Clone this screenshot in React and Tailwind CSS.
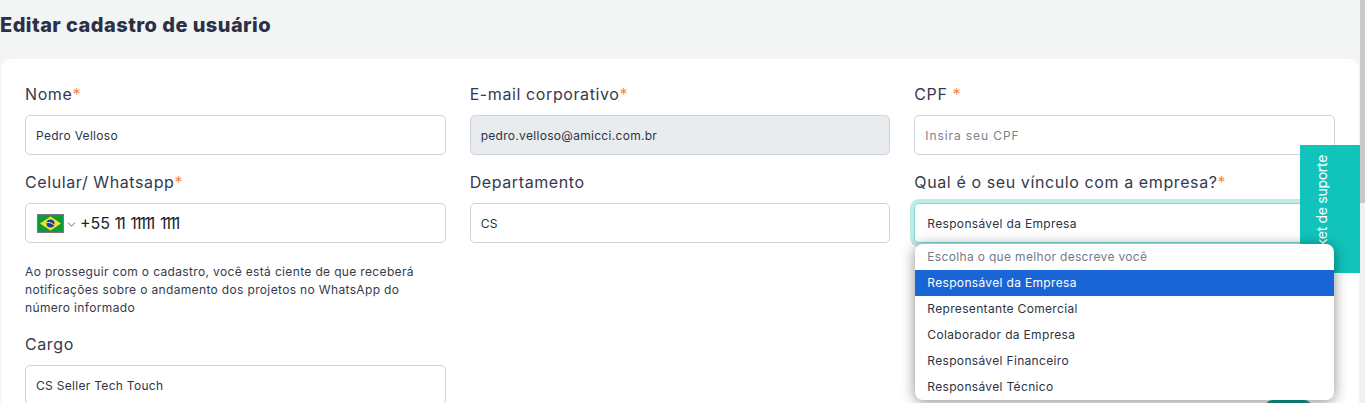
import { ChevronDown } from "lucide-react";

const font = "font-['Inter','Noto_Sans',sans-serif]";
const inputClass =
  "h-10 w-full rounded-[5px] border border-[#ced4da] px-[10px] text-[12px] tracking-[0.3px] text-[#2e3344] outline-none placeholder:tracking-[0.9px] placeholder:text-[#7d818d]";

const options = [
  "Responsável da Empresa",
  "Representante Comercial",
  "Colaborador da Empresa",
  "Responsável Financeiro",
  "Responsável Técnico",
];

const Label = ({ text, star }) => (
  <label className="mb-2 block h-6 text-[16px] leading-[22px] tracking-[0.6px] text-[#343a4e]">
    {text}
    {star && <span className="text-[#f58a42]">{star}</span>}
  </label>
);

const Field = ({ label, star, className = "bg-white", ...props }) => (
  <div>
    <Label text={label} star={star} />
    <input readOnly className={`${inputClass} ${className}`} {...props} />
  </div>
);

const BrazilFlag = () => (
  <svg width="27" height="19" viewBox="0 0 27 19" className="shrink-0">
    <rect width="27" height="19" fill="#7c7c7c" />
    <rect x="1" y="1" width="25" height="17" fill="#0c9b3a" />
    <polygon points="13.5,2.5 24,9.5 13.5,16.5 3,9.5" fill="#fde021" />
    <circle cx="13.5" cy="9.5" r="4" fill="#1c3f94" />
    <path d="M9.8 8.6 C12 8.2 15 9 17.1 10.9" stroke="#fff" strokeWidth="0.9" fill="none" />
  </svg>
);

const App = () => {
  return (
    <div className={`${font} relative flex h-[403px] w-[1365px] overflow-hidden bg-[#f3f5f5]`}>
      <div className="flex-1">
        <h1 className="h-[59px] pt-[11px] text-[20px] leading-[28px] font-extrabold tracking-[0.45px] text-[#2b3044]">
          Editar cadastro de usuário
        </h1>
        <div className="mx-px h-[400px] rounded-[10px] bg-white p-6">
          <div className="grid grid-cols-3 gap-x-6">
            <div className="flex flex-col gap-4">
              <Field label="Nome" star="*" defaultValue="Pedro Velloso" />
              <div>
                <Label text="Celular/ Whatsapp" star="*" />
                <div className="flex h-10 items-center rounded-[5px] border border-[#ced4da] bg-white pl-[11px]">
                  <BrazilFlag />
                  <ChevronDown size={13} strokeWidth={2} className="mt-[3px] ml-px text-[#9a9ea8]" />
                  <span className="ml-[2px] text-[16px] text-[#20232e]">
                    +55 <span className="tracking-[-1.9px] [word-spacing:4px]">11 11111 1111</span>
                  </span>
                </div>
              </div>
              <p className="mt-1 pr-2 text-[12px] leading-[18px] tracking-[0.35px] text-[#343a4e]">
                Ao prosseguir com o cadastro, você está ciente de que receberá notificações sobre o andamento dos projetos no WhatsApp do número informado
              </p>
              <Field label="Cargo" defaultValue="CS Seller Tech Touch" />
            </div>
            <div className="flex flex-col gap-4">
              <Field
                label="E-mail corporativo"
                star="*"
                defaultValue="pedro.velloso@amicci.com.br"
                className="bg-[#e9ecef]"
              />
              <Field label="Departamento" defaultValue="CS" />
            </div>
            <div className="flex flex-col gap-4">
              <Field label="CPF" star=" *" placeholder="Insira seu CPF" />
              <div className="relative">
                <Label text="Qual é o seu vínculo com a empresa?" star="*" />
                <div className="flex h-10 items-center rounded-[5px] border border-[#7fdbd3] bg-white px-3 pt-px text-[12px] tracking-[0.33px] text-[#2e3344] shadow-[0_0_0_4px_#bcece8]">
                  Responsável da Empresa
                </div>
                {/* open dropdown sits over the ticket tab */}
                <ul className="absolute top-[73px] right-px left-px z-20 overflow-hidden rounded-[8px] bg-white text-[12px] tracking-[0.33px] text-[#2e3344] shadow-[0_2px_14px_rgba(0,0,0,0.45)]">
                  <li className="flex h-[26px] items-center px-3 text-[#75798a]">Escolha o que melhor descreve você</li>
                  {options.map((opt, i) => (
                    <li
                      key={opt}
                      className={`flex h-[26px] items-center px-3 ${i === 0 ? "bg-[#1a65d6] text-white" : ""}`}
                    >
                      {opt}
                    </li>
                  ))}
                </ul>
              </div>
            </div>
          </div>
        </div>
      </div>

      {/* scrollbar */}
      <div className="flex h-full w-[5px] flex-col bg-[#f1f1f1]">
        <div className="h-[203px] bg-[#c9c9c9]" />
      </div>

      {/* ticket tab */}
      <div className="absolute top-[145px] right-[5px] z-10 flex h-[128px] w-[60px] items-start bg-[#10c4bb] pl-[11px]">
        <span className="mt-[10px] rotate-180 text-[14px] tracking-[-0.3px] whitespace-nowrap text-white [writing-mode:vertical-rl]">
          Abrir ticket de suporte
        </span>
      </div>

      {/* help button peeking out under the dropdown */}
      <div className="absolute top-[400px] left-[1265px] h-12 w-[47px] rounded-lg bg-[#0f9d94]" />
    </div>
  );
};

export default App;
